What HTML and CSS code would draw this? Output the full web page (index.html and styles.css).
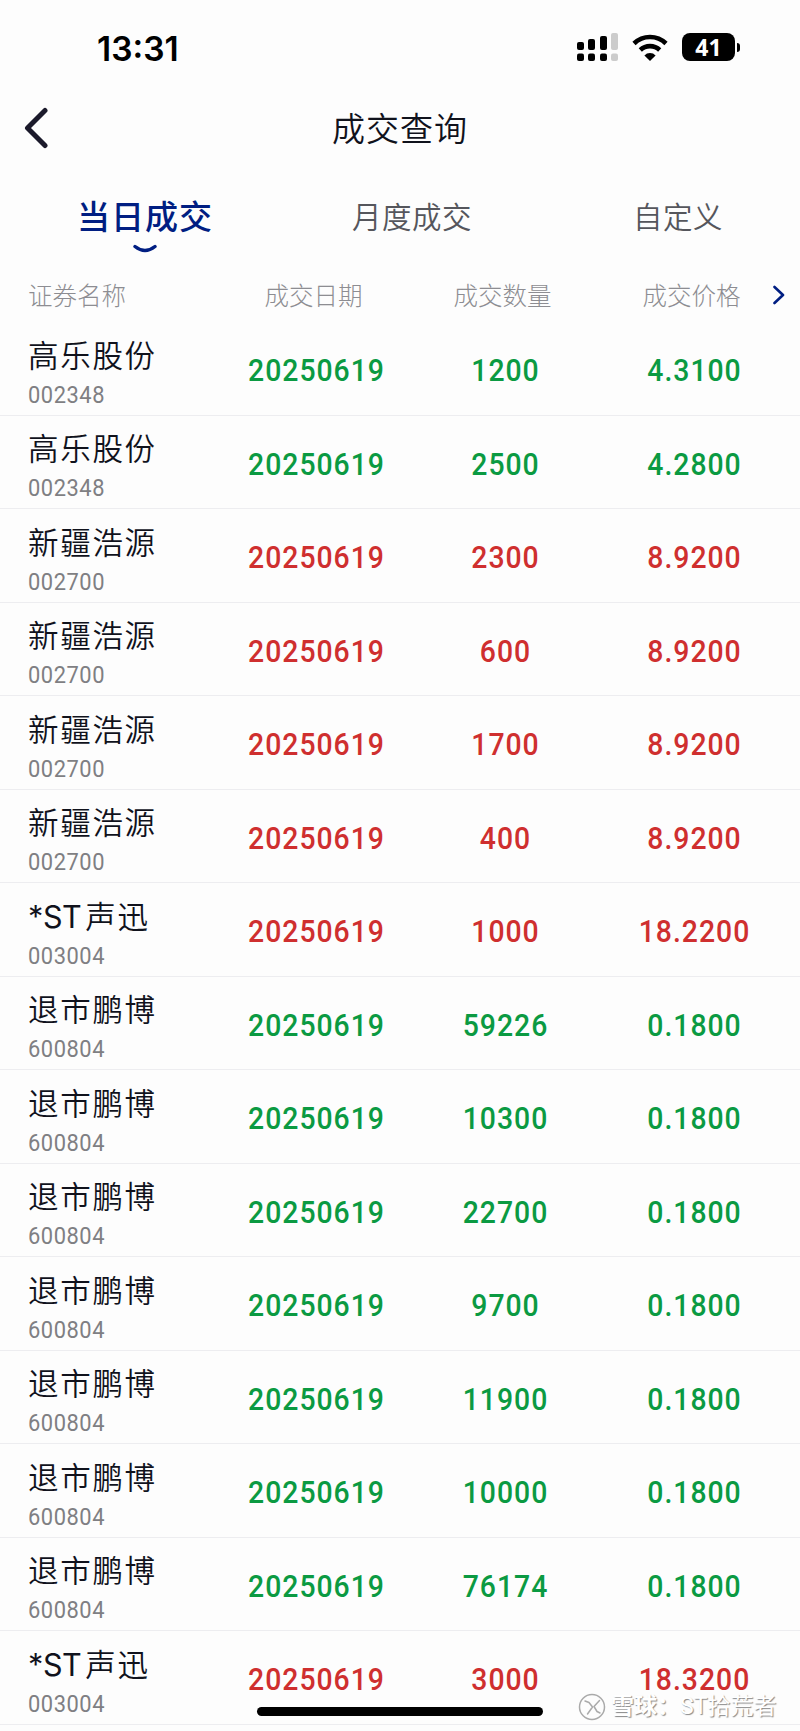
FILE: index.html
```html
<!DOCTYPE html>
<html lang="zh-CN">
<head>
    <meta charset="UTF-8">
    <meta name="viewport" content="width=device-width, initial-scale=1.0">
    <title>成交查询</title>
    <link rel="stylesheet" href="styles.css">
</head>
<body>
    <div class="status-bar">
        <span class="time">13:31</span>
        <div class="status-icons">
            <svg class="signal" width="42" height="28" viewBox="0 0 42 28">
                <rect x="0" y="9" width="7" height="8" rx="2"/>
                <rect x="11" y="6" width="7" height="11" rx="2"/>
                <rect x="23" y="3" width="7" height="14" rx="2"/>
                <rect class="off" x="34" y="0" width="7" height="17" rx="2"/>
                <rect x="0" y="20.500" width="7" height="7.500" rx="2"/>
                <rect x="11" y="20.500" width="7" height="7.500" rx="2"/>
                <rect x="23" y="20.500" width="7" height="7.500" rx="2"/>
                <rect class="off" x="34" y="20.500" width="7" height="7.500" rx="2"/>
            </svg>
            <svg class="wifi" width="36" height="27" viewBox="0 0 36 27">
                <path d="M2 9.500a23 23 0 0 1 32 0M8.300 16a14 14 0 0 1 19.400 0"/>
                <path class="dot" d="M18 27l-5.600-5.600a8 8 0 0 1 11.200 0z"/>
            </svg>
            <div class="battery">41</div>
            <div class="battery-tip"></div>
        </div>
    </div>

    <header>
        <svg class="back" width="26" height="42" viewBox="0 0 26 42">
            <path d="M22 3.500L4.500 21 22 38.500"/>
        </svg>
        <h1>成交查询</h1>
    </header>

    <nav class="tabs">
        <div class="tab active">
            当日成交
            <svg class="smile" width="24" height="10" viewBox="0 0 24 10">
                <path d="M2 2.500Q12 10.500 22 2.500"/>
            </svg>
        </div>
        <div class="tab">月度成交</div>
        <div class="tab last">自定义</div>
    </nav>

    <div class="list-head">
        <span>证券名称</span>
        <span>成交日期</span>
        <span>成交数量</span>
        <span>成交价格</span>
        <svg class="more" width="12" height="20" viewBox="0 0 12 20">
            <path d="M1.500 2L10 10 1.500 18"/>
        </svg>
    </div>

    <main class="list">
        <div class="row sell">
            <div class="stock"><div class="name">高乐股份</div><div class="code">002348</div></div>
            <span>20250619</span><span>1200</span><span>4.3100</span>
        </div>
        <div class="row sell">
            <div class="stock"><div class="name">高乐股份</div><div class="code">002348</div></div>
            <span>20250619</span><span>2500</span><span>4.2800</span>
        </div>
        <div class="row buy">
            <div class="stock"><div class="name">新疆浩源</div><div class="code">002700</div></div>
            <span>20250619</span><span>2300</span><span>8.9200</span>
        </div>
        <div class="row buy">
            <div class="stock"><div class="name">新疆浩源</div><div class="code">002700</div></div>
            <span>20250619</span><span>600</span><span>8.9200</span>
        </div>
        <div class="row buy">
            <div class="stock"><div class="name">新疆浩源</div><div class="code">002700</div></div>
            <span>20250619</span><span>1700</span><span>8.9200</span>
        </div>
        <div class="row buy">
            <div class="stock"><div class="name">新疆浩源</div><div class="code">002700</div></div>
            <span>20250619</span><span>400</span><span>8.9200</span>
        </div>
        <div class="row buy">
            <div class="stock"><div class="name"><span class="latin">*ST</span>声迅</div><div class="code">003004</div></div>
            <span>20250619</span><span>1000</span><span>18.2200</span>
        </div>
        <div class="row sell">
            <div class="stock"><div class="name">退市鹏博</div><div class="code">600804</div></div>
            <span>20250619</span><span>59226</span><span>0.1800</span>
        </div>
        <div class="row sell">
            <div class="stock"><div class="name">退市鹏博</div><div class="code">600804</div></div>
            <span>20250619</span><span>10300</span><span>0.1800</span>
        </div>
        <div class="row sell">
            <div class="stock"><div class="name">退市鹏博</div><div class="code">600804</div></div>
            <span>20250619</span><span>22700</span><span>0.1800</span>
        </div>
        <div class="row sell">
            <div class="stock"><div class="name">退市鹏博</div><div class="code">600804</div></div>
            <span>20250619</span><span>9700</span><span>0.1800</span>
        </div>
        <div class="row sell">
            <div class="stock"><div class="name">退市鹏博</div><div class="code">600804</div></div>
            <span>20250619</span><span>11900</span><span>0.1800</span>
        </div>
        <div class="row sell">
            <div class="stock"><div class="name">退市鹏博</div><div class="code">600804</div></div>
            <span>20250619</span><span>10000</span><span>0.1800</span>
        </div>
        <div class="row sell">
            <div class="stock"><div class="name">退市鹏博</div><div class="code">600804</div></div>
            <span>20250619</span><span>76174</span><span>0.1800</span>
        </div>
        <div class="row buy">
            <div class="stock"><div class="name"><span class="latin">*ST</span>声迅</div><div class="code">003004</div></div>
            <span>20250619</span><span>3000</span><span>18.3200</span>
        </div>
    </main>

    <div class="home-indicator"></div>

    <div class="watermark">
        <svg width="28" height="28" viewBox="0 0 28 28">
            <circle cx="14" cy="14" r="12.500"/>
            <path d="M7 8l4 1.500 3.500 4.500-5 7M21.500 7.500L16 13.500l3 5 3 1.500"/>
        </svg>
        <b>雪球：</b><span>ST拾荒者</span>
    </div>
</body>
</html>
```
FILE: styles.css
```css
:root {
    --blue: #001e82;
    --green: #0b9a42;
    --red: #cf2f2f;
    --dark: #10121c;
}

* {
    box-sizing: border-box;
    margin: 0;
    padding: 0;
}

body {
    position: relative;
    width: 800px;
    height: 1731px;
    overflow: hidden;
    background-color: #fdfdfd;
    color: var(--dark);
    font-family: Roboto, "Noto Sans CJK SC", sans-serif;
}

svg {
    display: block;
    fill: none;
    stroke-linecap: round;
    stroke-linejoin: round;
}

.status-bar {
    height: 94px;
    padding: 0 60px 0 97px;
    display: flex;
    align-items: center;
    justify-content: space-between;
    color: #000;
}

.time {
    font-family: Inter, sans-serif;
    font-size: 33.5px;
    font-weight: 600;
    line-height: 40px;
    padding-top: 3px;
}

.status-icons {
    display: flex;
    align-items: center;
}

.signal {
    fill: #000;
    margin-right: 13px;
}

.signal .off {
    fill: #ccc;
}

.wifi {
    stroke: #000;
    stroke-width: 4.6;
    stroke-linecap: butt;
    margin-right: 14px;
}

.wifi .dot {
    fill: #000;
    stroke: none;
}

.battery {
    width: 53px;
    height: 28px;
    border-radius: 8px;
    background-color: #000;
    color: #fff;
    font-family: "Noto Sans", sans-serif;
    font-size: 23px;
    font-weight: 700;
    line-height: 28px;
    text-align: center;
}

.battery-tip {
    width: 3px;
    height: 9px;
    margin-left: 2px;
    border-radius: 0 5px 5px 0;
    background-color: #000;
}

header {
    height: 68px;
    display: grid;
    grid-template-columns: 100px 1fr 100px;
    align-items: center;
}

.back {
    margin-left: 23px;
    stroke: #1b1a2b;
    stroke-width: 5;
}

h1 {
    font-size: 33px;
    font-weight: 350;
    line-height: 48px;
    letter-spacing: 1px;
    text-align: center;
    padding-top: 4px;
}

.tabs {
    height: 98px;
    display: grid;
    grid-template-columns: 290px 244px 266px;
    padding-top: 32px;
}

.tab {
    font-size: 29.5px;
    font-weight: 350;
    line-height: 48px;
    letter-spacing: 0.5px;
    text-align: center;
    color: #55565c;
}

.tab.active {
    font-size: 33px;
    font-weight: 500;
    letter-spacing: 1px;
    color: var(--blue);
}

.tab.last {
    padding-left: 22px;
}

.smile {
    margin: 2px auto 0;
    stroke: var(--blue);
    stroke-width: 3.4;
}

.list-head,
.row {
    display: grid;
    grid-template-columns: 193px 189px 189px 189px 1fr;
    align-items: center;
    padding-left: 29px;
    text-align: center;
}

.list-head {
    grid-template-columns: 193px 189px 189px 171px 1fr;
    height: 62px;
    padding-top: 6px;
    padding-left: 26px;
    color: #8d8d92;
    font-size: 24.5px;
    font-weight: 300;
}

.list-head span:first-child {
    text-align: left;
    padding-left: 2px;
}

.list-head span:nth-child(4) {
    padding-left: 18px;
}

.more {
    margin: 2px 0 0 5px;
    stroke: var(--blue);
    stroke-width: 2.6;
}

.row {
    height: 93.5px;
    border-bottom: 1px solid #ededf0;
    font-size: 31.5px;
    font-weight: 500;
    letter-spacing: 1.1px;
}

/* narrow digits */
.row > span {
    padding-top: 5px;
    transform: scaleX(0.9);
}

.sell {
    color: var(--green);
}

.buy {
    color: var(--red);
}

.stock {
    text-align: left;
    font-weight: 400;
    padding-top: 9px;
    margin-left: -1px;
}

.name {
    color: var(--dark);
    font-size: 30.5px;
    font-weight: 350;
    line-height: 44px;
    letter-spacing: 1.7px;
}

.latin {
    font-family: Inter, sans-serif;
    font-weight: 400;
    letter-spacing: -0.4px;
    margin-right: 4px;
}

.code {
    color: #7f7f83;
    font-size: 24.3px;
    line-height: 32px;
    letter-spacing: 0.6px;
    transform: scaleX(0.9);
    transform-origin: left;
}

.home-indicator {
    position: absolute;
    left: 257px;
    top: 1707px;
    width: 286px;
    height: 9px;
    border-radius: 5px;
    background-color: #000;
}

.watermark {
    position: absolute;
    left: 578px;
    top: 1693px;
    display: flex;
    align-items: center;
    font-size: 23px;
    line-height: 26px;
    color: #fff;
    text-shadow: 1px 1px 1px #888;
}

.watermark svg {
    margin-right: 5px;
    stroke: #aaa;
    stroke-width: 1.5;
}
```
